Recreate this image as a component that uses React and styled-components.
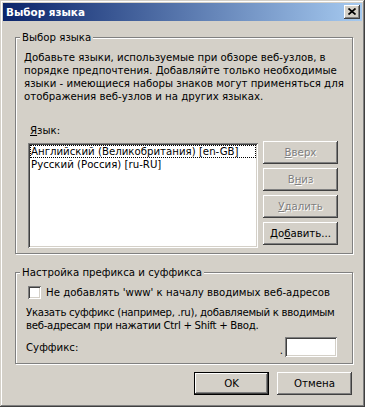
import styled, { createGlobalStyle } from "styled-components";

const Global = createGlobalStyle`
  html, body {
    margin: 0;
    padding: 0;
    background: #d4d0c8;
  }
  body {
    font-family: "DejaVu Sans", "Liberation Sans", sans-serif;
    font-size: 10.2px;
    color: #000;
  }
`;

const Window = styled.div`
  width: 365px;
  height: 407px;
  box-sizing: border-box;
  padding: 3px;
  background: #d4d0c8;
  box-shadow: inset -1px -1px #404040, inset 1px 1px #d4d0c8,
    inset -2px -2px #808080, inset 2px 2px #ffffff;
  display: flex;
  flex-direction: column;
`;

const TitleBar = styled.div`
  height: 18px;
  display: flex;
  align-items: center;
  justify-content: space-between;
  padding: 0 2px 0 3px;
  background: linear-gradient(to right, #0a246a, #a6caf0);
  color: #fff;
  font-weight: bold;
  font-size: 10.4px;
`;

const CloseButton = styled.div`
  width: 16px;
  height: 14px;
  box-sizing: border-box;
  background: #d4d0c8;
  display: flex;
  align-items: center;
  justify-content: center;
  box-shadow: inset -1px -1px #404040, inset 1px 1px #ffffff,
    inset -2px -2px #808080, inset 2px 2px #d4d0c8;
  padding: 0 1px 1px 0;
`;

const Body = styled.div`
  flex: 1;
  display: flex;
  flex-direction: column;
  padding: 10px 9px 0 12px;
`;

const Group = styled.fieldset`
  margin: ${(p) => p.$top || 0}px 0 0 0;
  padding: 0;
  min-width: 0;
  border: 1px solid #808080;
  box-shadow: 1px 1px 0 #ffffff, inset 1px 1px 0 #ffffff;
`;

const Caption = styled.legend`
  margin-left: 4px;
  padding: 0 2px;
  line-height: 13px;
  background: #d4d0c8;
`;

const GroupInner = styled.div`
  padding: ${(p) => p.$pad};
  display: flex;
  flex-direction: column;
`;

const Text = styled.div`
  line-height: 13px;
  white-space: nowrap;
  margin: ${(p) => p.$margin || 0};
  letter-spacing: ${(p) => p.$spacing || "normal"};
`;

const ListRow = styled.div`
  display: flex;
  align-items: flex-start;
  margin: 21px 0 0 4px;
`;

const ListColumn = styled.div`
  display: flex;
  flex-direction: column;
`;

const FieldLabel = styled.div`
  line-height: 13px;
  padding-left: 2px;
  margin-bottom: 6px;
`;

const ListBox = styled.div`
  width: 230px;
  height: 105px;
  box-sizing: border-box;
  padding: 2px;
  background: #fff;
  box-shadow: inset 1px 1px #808080, inset -1px -1px #ffffff,
    inset 2px 2px #404040, inset -2px -2px #d4d0c8;
`;

const ListItem = styled.div`
  height: 13px;
  line-height: 13px;
  padding-left: 1px;
  white-space: nowrap;
  overflow: hidden;
  outline: ${(p) => (p.$focused ? "1px dotted #000" : "none")};
  outline-offset: -1px;
`;

const ButtonColumn = styled.div`
  display: flex;
  flex-direction: column;
  gap: 4px;
  margin: 17px 0 0 5px;
`;

const Button = styled.div`
  width: 75px;
  height: 23px;
  box-sizing: border-box;
  display: flex;
  align-items: center;
  justify-content: center;
  white-space: nowrap;
  background: #d4d0c8;
  color: ${(p) => (p.$disabled ? "#808080" : "#000")};
  text-shadow: ${(p) => (p.$disabled ? "1px 1px 0 #ffffff" : "none")};
  box-shadow: ${(p) =>
    p.$default
      ? "inset 0 0 0 1px #000, inset -2px -2px #404040, inset 2px 2px #ffffff, inset -3px -3px #808080"
      : "inset -1px -1px #404040, inset 1px 1px #ffffff, inset -2px -2px #808080, inset 2px 2px #d4d0c8"};
`;

const CheckRow = styled.div`
  display: flex;
  align-items: center;
  margin-left: 2px;
  line-height: 13px;
  white-space: nowrap;
`;

const CheckBox = styled.div`
  width: 13px;
  height: 13px;
  flex-shrink: 0;
  box-sizing: border-box;
  background: #fff;
  margin-right: 5px;
  box-shadow: inset 1px 1px #808080, inset -1px -1px #ffffff,
    inset 2px 2px #404040, inset -2px -2px #d4d0c8;
`;

const SuffixRow = styled.div`
  display: flex;
  align-items: center;
  margin-top: 5px;
`;

const Spacer = styled.div`
  flex: 1;
`;

const Dot = styled.span`
  margin-right: 2px;
  line-height: 13px;
  align-self: flex-end;
`;

const Edit = styled.div`
  width: 52px;
  height: 20px;
  box-sizing: border-box;
  background: #fff;
  box-shadow: inset 1px 1px #808080, inset -1px -1px #ffffff,
    inset 2px 2px #404040, inset -2px -2px #d4d0c8;
`;

const Footer = styled.div`
  display: flex;
  justify-content: flex-end;
  gap: 8px;
  margin-top: 8px;
  padding-right: 1px;
`;

export default function App() {
  return (
    <>
      <Global />
      <Window>
        <TitleBar>
          <span>Выбор языка</span>
          <CloseButton>
            <svg width="8" height="7" viewBox="0 0 8 7">
              <path d="M0.5 0.5L7.5 6.5M7.5 0.5L0.5 6.5" stroke="#000" strokeWidth="1.7" fill="none" />
            </svg>
          </CloseButton>
        </TitleBar>
        <Body>
          <Group>
            <Caption>Выбор языка</Caption>
            <GroupInner $pad="7px 12px 5px 8px">
              <Text>
                Добавьте языки, используемые при обзоре веб-узлов, в<br />
                порядке предпочтения. Добавляйте только необходимые<br />
                языки - имеющиеся наборы знаков могут применяться для<br />
                отображения веб-узлов и на других языках.
              </Text>
              <ListRow>
                <ListColumn>
                  <FieldLabel>
                    <u>Я</u>зык:
                  </FieldLabel>
                  <ListBox>
                    <ListItem $focused>Английский (Великобритания) [en-GB]</ListItem>
                    <ListItem>Русский (Россия) [ru-RU]</ListItem>
                  </ListBox>
                </ListColumn>
                <ButtonColumn>
                  <Button $disabled>
                    <span><u>В</u>верх</span>
                  </Button>
                  <Button $disabled>
                    <span>В<u>н</u>из</span>
                  </Button>
                  <Button $disabled>
                    <span><u>У</u>далить</span>
                  </Button>
                  <Button>
                    <span>До<u>б</u>авить...</span>
                  </Button>
                </ButtonColumn>
              </ListRow>
            </GroupInner>
          </Group>
          <Group $top={12}>
            <Caption>Настройка префикса и суффикса</Caption>
            <GroupInner $pad="7px 15px 6px 10px">
              <CheckRow>
                <CheckBox />
                <span>Не добавлять 'www' к началу вводимых веб-адресов</span>
              </CheckRow>
              <Text $margin="7px 0 0 0" $spacing="-0.3px">
                Указать суффикс (например, .ru), добавляемый к вводимым<br />
                веб-адресам при нажатии Ctrl + Shift + Ввод.
              </Text>
              <SuffixRow>
                <span>Суффикс:</span>
                <Spacer />
                <Dot>.</Dot>
                <Edit />
              </SuffixRow>
            </GroupInner>
          </Group>
          <Footer>
            <Button $default>OK</Button>
            <Button>Отмена</Button>
          </Footer>
        </Body>
      </Window>
    </>
  );
}
